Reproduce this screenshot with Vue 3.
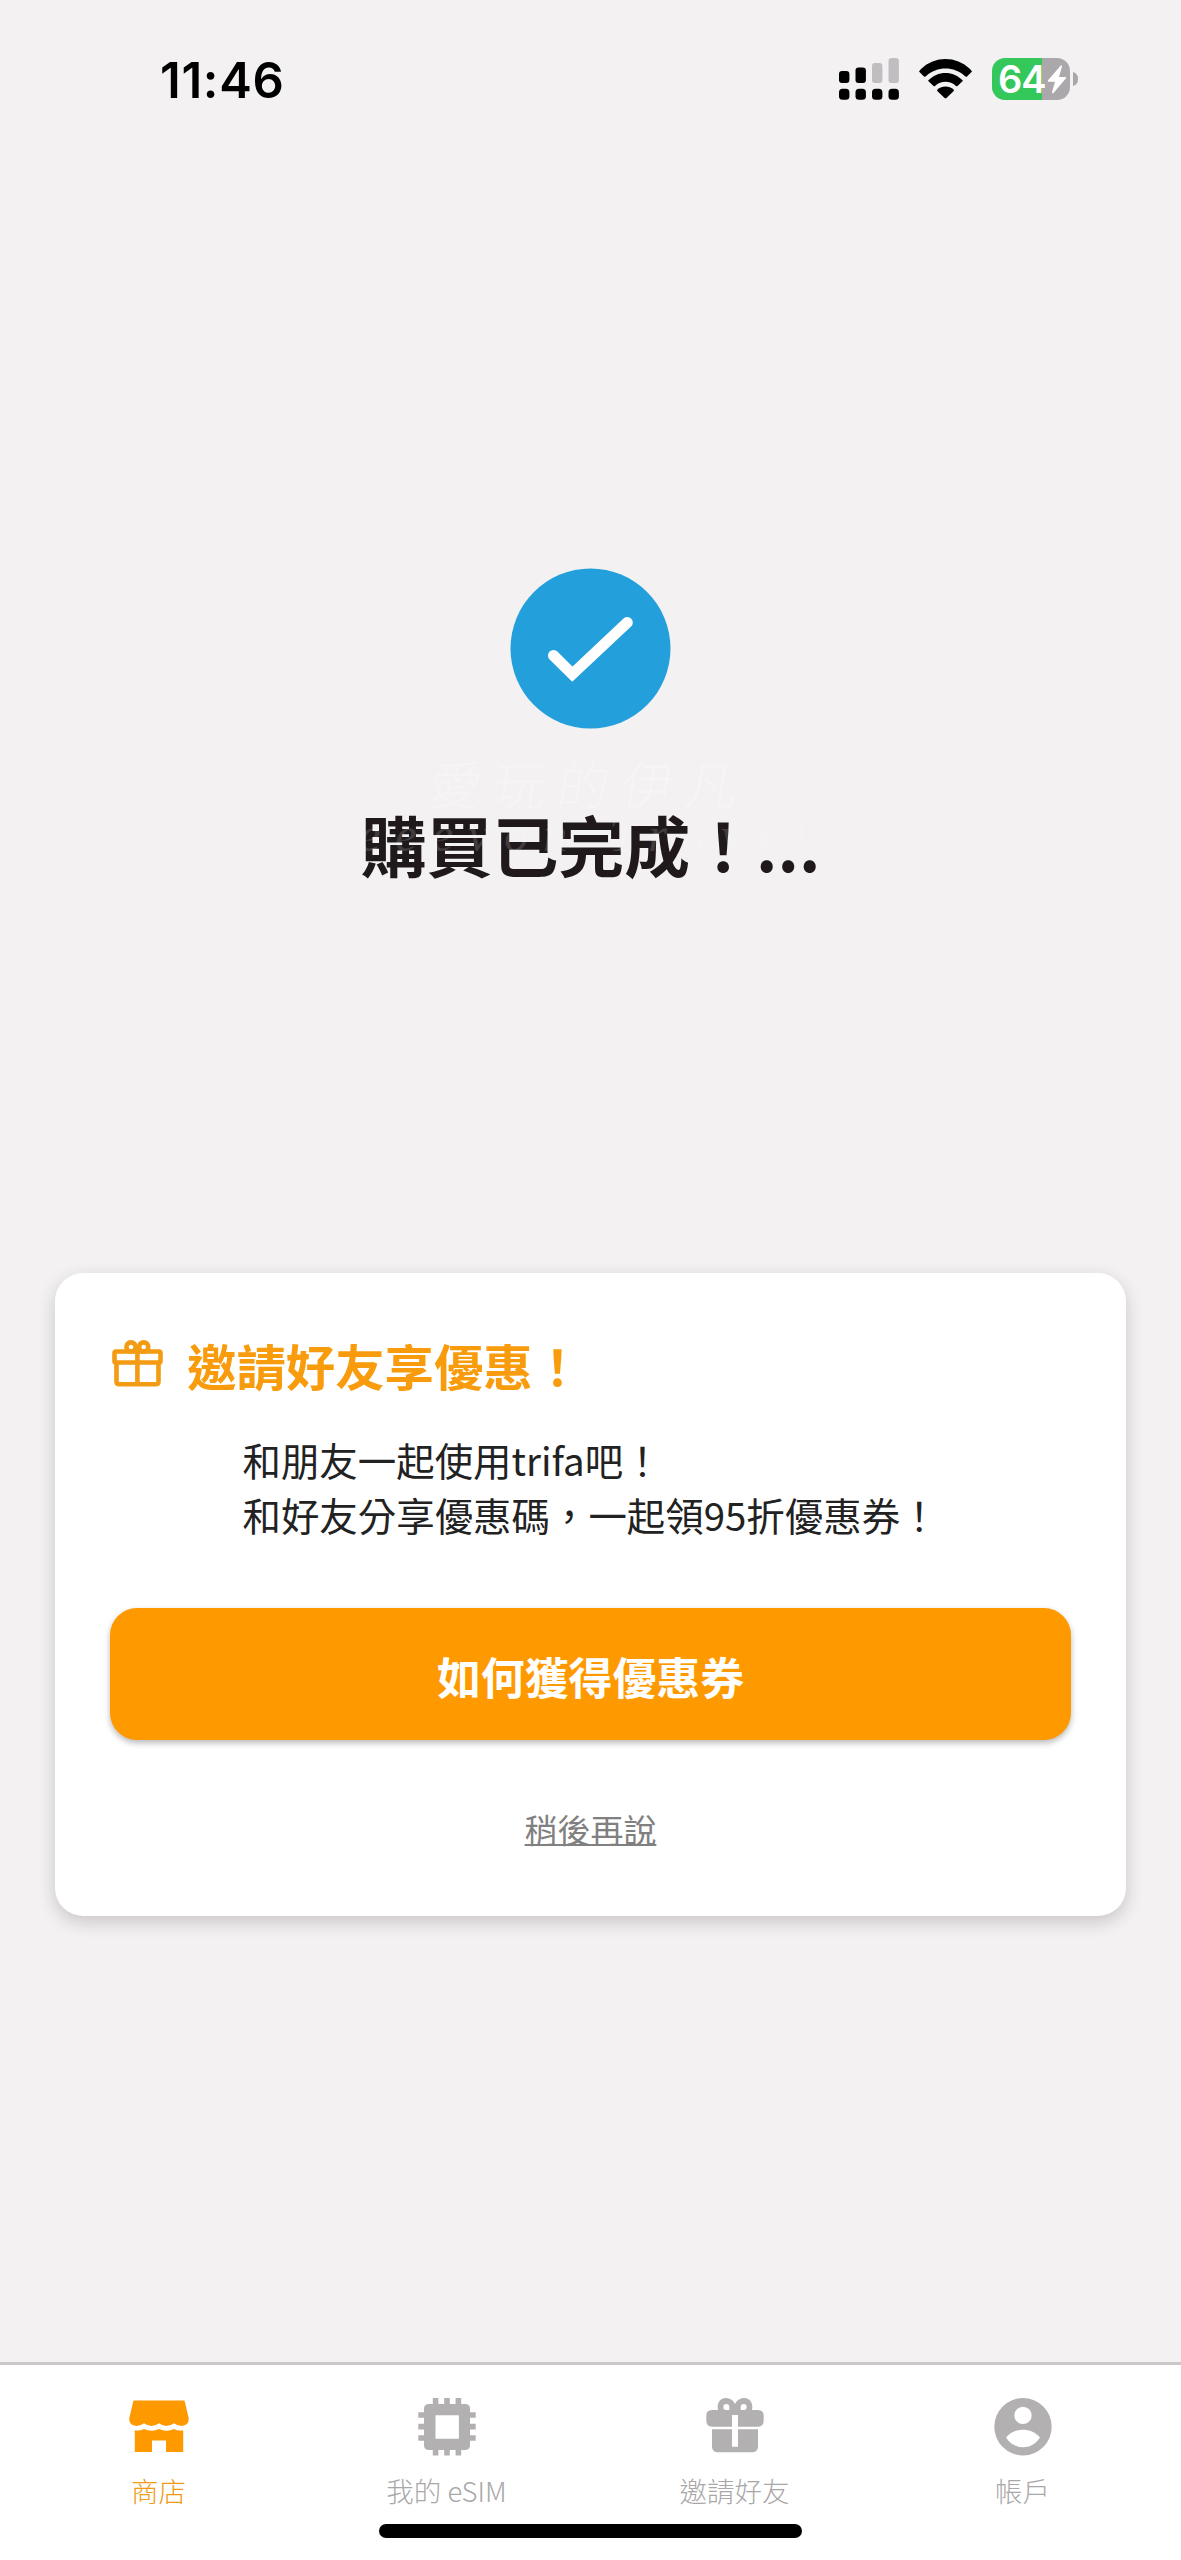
<script setup>
const bars = [
  { x: 0, y: 13, h: 12, on: true },
  { x: 16.5, y: 9.5, h: 15.5, on: true },
  { x: 33, y: 5, h: 20, on: false },
  { x: 49.5, y: 0, h: 25, on: false },
]
const tabs = [
  { id: 'store', label: '商店', active: true },
  { id: 'chip', label: '我的 eSIM' },
  { id: 'gift', label: '邀請好友' },
  { id: 'account', label: '帳戶' },
]
</script>

<template>
  <div class="screen">
    <header class="status">
      <span class="time">11:46</span>
      <div class="indicators">
        <svg class="signal" width="60" height="42" viewBox="0 0 60 42">
          <template v-for="b in bars" :key="b.x">
            <rect :x="b.x" :y="b.y" width="10.4" :height="b.h" rx="3" :fill="b.on ? '#000' : '#c0bec0'" />
            <rect :x="b.x" y="30.8" width="10.4" height="11" rx="3.6" fill="#000" />
          </template>
        </svg>
        <svg class="wifi" width="53" height="40" viewBox="0 0 53 40">
          <path d="M0 12.6Q1 11 2 10C16-3.3 37-3.3 51 10Q52 11 53 12.6L48 17.5Q47 18 46 17.2C35 7 18 7 7 17.2Q6 18 5 17.5Z" />
          <path d="M9 21.7C18.500 11.300 34.500 11.300 44 21.700L38.500 27Q37.700 27.500 37 26.900C31 21.500 22 21.500 16 26.900Q15.300 27.500 14.500 27Z" />
          <path d="M18.300 30.800C23 26.400 30 26.400 34.700 30.800Q35.200 31.400 34.700 32L27.700 38.800Q26.500 39.800 25.300 38.800L18.300 32Q17.800 31.400 18.300 30.800Z" />
        </svg>
        <div class="battery">
          <div class="cell">
            <span class="level">64</span>
            <svg class="bolt" width="20" height="29" viewBox="0 0 20 29">
              <path d="M13.800.6 1 15.300Q.3 16.600 1.600 16.700H8L5 27.300Q5 29 6.500 28L19 13.300Q19.700 12 18.400 11.900H12L15 1.500Q15-.3 13.800.6Z" fill="#fff" />
            </svg>
          </div>
          <svg width="5" height="14" viewBox="0 0 5 14"><path d="M0 0Q5 1.500 5 7T0 14Z" fill="#aaa8aa" /></svg>
        </div>
      </div>
    </header>

    <main>
      <section class="result">
        <svg width="161" height="161" viewBox="0 0 161 161">
          <circle cx="80.500" cy="80.500" r="80" fill="#239fdb" />
          <path d="M43.500 87.500 62.300 106.200 117.300 54.500" fill="none" stroke="#fff" stroke-width="11" stroke-linecap="round" />
        </svg>
        <h1>購買已完成！...</h1>
        <div class="watermark">
          <span class="wm-name">愛玩的伊凡</span>
          <span class="wm-script">eeevon Travel</span>
        </div>
      </section>

      <section class="card">
        <div class="card-title">
          <svg width="51" height="47" viewBox="0 0 51 47" fill="none" stroke="#f39b12" stroke-width="4.600">
            <circle cx="19" cy="7" r="4.600" />
            <circle cx="31.700" cy="7" r="4.600" />
            <rect x="2.500" y="11.500" width="46" height="11" rx="1.600" />
            <path d="M4.500 22.500V41.500Q4.500 44.300 7.300 44.300H43.700Q46.500 44.300 46.500 41.500V22.500M25.400 11V44" />
          </svg>
          <h2>邀請好友享優惠！</h2>
        </div>
        <p>和朋友一起使用trifa吧！<br />和好友分享優惠碼，一起領95折優惠券！</p>
        <button type="button">如何獲得優惠券</button>
        <a class="later">稍後再說</a>
      </section>
    </main>

    <nav>
      <div class="tabs">
        <div v-for="t in tabs" :key="t.id" class="tab" :class="{ active: t.active }">
          <svg width="60" height="58" viewBox="0 0 60 58" fill="currentColor">
            <template v-if="t.id === 'store'">
              <path d="M4.500 2.500H55.500L59.700 20Q60.300 27.500 52.500 28Q48.500 28 45 25.300Q41.500 28 37.500 28Q33.500 28 30 25.300Q26.500 28 22.500 28Q18.500 28 15 25.300Q11.500 28 7.500 28Q-.3 27.500.3 20Z" />
              <path d="M5.800 32.300Q11 33.300 15 31Q22.500 34.500 30 31Q37.500 34.500 45 31Q49 33.300 54.200 32.300V54H37V42.500H23V54H5.800Z" />
            </template>
            <template v-else-if="t.id === 'chip'">
              <path fill-rule="evenodd" d="M11 6H49Q52.500 6.500 53 10V48Q52.500 51.500 49 52H11Q7.500 51.500 7 48V10Q7.500 6.500 11 6ZM18.500 17.300V40.700H41.900V17.300Z" />
              <path d="M15.800 0h5.600v7h-5.600zM27.200 0h5.600v7h-5.600zM38.600 0h5.600v7h-5.600zM15.800 51h5.600v6.500h-5.600zM27.200 51h5.600v6.500h-5.600zM38.600 51h5.600v6.500h-5.600zM1.300 14.200h7v5.600h-7zM1.300 25.800h7v5.600h-7zM1.300 37.200h7v5.600h-7zM52 14.200h6.700v5.600H52zM52 25.800h6.700v5.600H52zM52 37.200h6.700v5.600H52z" />
            </template>
            <template v-else-if="t.id === 'gift'">
              <path fill-rule="evenodd" d="M13 12C11.500 5 15 0 21 0Q27.500.3 30 6Q32.500.3 39 0C45 0 48.500 5 47 12H53Q58.700 12.300 58.700 17.500V23Q58.500 28.500 53 28.700H33V17H27V28.700H7Q1.500 28.500 1.300 23V17.500Q1.300 12.300 7 12ZM24.300 12V9A3 3 0 0 0 18.300 9Q18.300 11 20 12ZM35.700 12H40Q41.700 11 41.700 9A3 3 0 0 0 35.700 9Z" />
              <path d="M7 31.300H27V48.700H33V31.300H53V49Q52.500 54 48 54.300H12Q7.500 54 7 49Z" />
            </template>
            <path v-else fill-rule="evenodd" d="M30 0A28.700 28.700 0 0 0 30 57.400A28.700 28.700 0 0 0 30 0ZM30 8.700A8.700 8.700 0 0 1 30 26.100A8.700 8.700 0 0 1 30 8.700ZM13 39.500C21 29 39 29 47 39.500C39 52.500 21 52.500 13 39.500Z" />
          </svg>
          <span>{{ t.label }}</span>
        </div>
      </div>
      <div class="home"></div>
    </nav>
  </div>
</template>

<style>
body { background: #f3f1f2; }
</style>

<style scoped>
* { box-sizing: border-box; }
.screen {
  width: 1181px;
  height: 2560px;
  display: flex;
  flex-direction: column;
  overflow: hidden;
  background: #f3f1f2;
  font-family: "Noto Sans CJK TC", sans-serif;
}
.status {
  height: 160px;
  flex: none;
  display: flex;
  justify-content: space-between;
  align-items: flex-start;
  padding: 58px 103px 0 160px;
}
.time {
  padding-top: 2px;
  font: 600 49px/42px Inter, sans-serif;
  letter-spacing: 0.7px;
  color: #000;
}
.indicators { display: flex; }
.wifi { margin: 1px 20px 0 20.500px; }
.battery { display: flex; align-items: center; gap: 3px; }
.cell {
  width: 78px;
  height: 42px;
  border-radius: 13px;
  display: flex;
  align-items: center;
  padding-left: 6px;
  background: linear-gradient(90deg, #34c759 0 50px, #aaa8aa 50px);
}
.level {
  width: 49px;
  font: 600 38px/42px Inter, sans-serif;
  letter-spacing: -1px;
  color: #fff;
}
main {
  flex: 1;
  display: flex;
  flex-direction: column;
  align-items: center;
}
.result {
  position: relative;
  height: 1113px;
  padding-top: 408px;
  display: flex;
  flex-direction: column;
  align-items: center;
}
h1 {
  margin: 67px 0 0;
  font-size: 65.900px;
  line-height: 96px;
  font-weight: 700;
  color: #1f191b;
  white-space: nowrap;
}
.watermark {
  position: absolute;
  top: 591px;
  left: 50%;
  width: 500px;
  transform: translateX(-50%);
  display: flex;
  flex-direction: column;
  align-items: center;
  color: #fff;
  white-space: nowrap;
}
.wm-name {
  font-size: 52px;
  line-height: 64px;
  font-weight: 300;
  letter-spacing: 12px;
  opacity: 0.32;
  transform: skewX(-8deg);
}
.wm-script {
  font: italic 48px/40px "Liberation Serif", serif;
  letter-spacing: 15px;
  opacity: 0.15;
}
.card {
  width: 1071px;
  height: 643px;
  padding: 54px 55px;
  display: flex;
  flex-direction: column;
  align-items: center;
  background: #fff;
  border-radius: 28px;
  box-shadow: 0 6px 17px rgba(40, 30, 35, 0.2);
}
.card-title {
  align-self: stretch;
  height: 72px;
  display: flex;
  align-items: center;
  gap: 24px;
  padding-left: 2px;
}
h2 {
  margin: 3px 0 0;
  font-size: 49.400px;
  line-height: 72px;
  font-weight: 700;
  color: #f89c0e;
}
p {
  margin: 33px 0 0;
  font-size: 38.450px;
  line-height: 55px;
  font-weight: 400;
  color: #222;
}
button {
  width: 961px;
  height: 132px;
  flex: none;
  margin-top: 66px;
  padding: 3px 0 0;
  border: 0;
  border-radius: 27px;
  background: #ff9900;
  color: #fff;
  font-family: inherit;
  font-size: 43.900px;
  font-weight: 700;
  line-height: 64px;
  box-shadow: 0 3px 6px rgba(0, 0, 0, 0.28);
}
.later {
  margin-top: 65px;
  font-size: 32.950px;
  line-height: 48px;
  color: #818081;
  text-decoration: underline;
  text-decoration-thickness: 2px;
}
nav {
  height: 198px;
  flex: none;
  border-top: 3px solid #cac8ca;
  background: #fff;
  display: flex;
  flex-direction: column;
  align-items: center;
}
.tabs { display: flex; padding-top: 33px; }
.tab {
  width: 288px;
  display: flex;
  flex-direction: column;
  align-items: center;
  color: #b3b0b2;
}
.tab.active { color: #ff9900; }
.tab span {
  margin-top: 14px;
  font-size: 27.500px;
  line-height: 40px;
  font-weight: 300;
  color: #aaa7a9;
}
.tab.active span { color: #f09a18; }
.home {
  width: 423px;
  height: 14px;
  margin-top: 14px;
  border-radius: 7px;
  background: #000;
}
</style>
